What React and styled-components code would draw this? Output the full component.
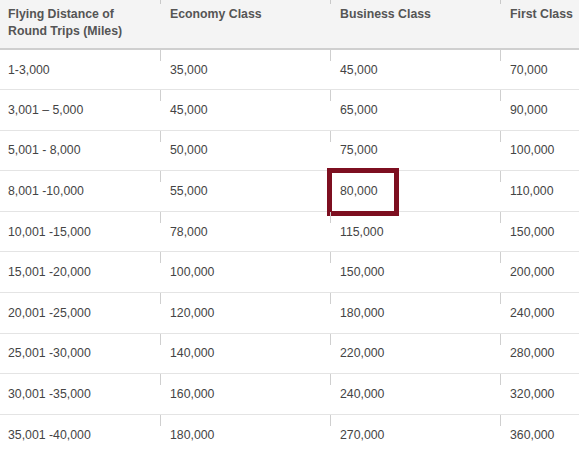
import React from 'react'
import styled, { createGlobalStyle } from 'styled-components'

const rows = [
  ['1-3,000', '35,000', '45,000', '70,000'],
  ['3,001 – 5,000', '45,000', '65,000', '90,000'],
  ['5,001 - 8,000', '50,000', '75,000', '100,000'],
  ['8,001 -10,000', '55,000', '80,000', '110,000'],
  ['10,001 -15,000', '78,000', '115,000', '150,000'],
  ['15,001 -20,000', '100,000', '150,000', '200,000'],
  ['20,001 -25,000', '120,000', '180,000', '240,000'],
  ['25,001 -30,000', '140,000', '220,000', '280,000'],
  ['30,001 -35,000', '160,000', '240,000', '320,000'],
  ['35,001 -40,000', '180,000', '270,000', '360,000'],
]

const GlobalStyle = createGlobalStyle`
  body {
    margin: 0;
    background: #fff;
    font-family: "Liberation Sans", Arial, sans-serif;
    overflow: hidden;
  }
`

const Table = styled.table`
  border-collapse: collapse;
  width: 579px;
  table-layout: fixed;
  font-size: 12.3px;
  color: #444;
`

const Head = styled.th`
  position: relative;
  box-sizing: border-box;
  width: ${p => p.$w ? p.$w + 'px' : 'auto'};
  background: #f4f4f4;
  border-bottom: 2px solid #cfcfcf;
  color: #555;
  font-weight: bold;
  text-align: left;
  vertical-align: top;
  line-height: 17px;
  padding: 6px 9px 8px ${p => p.$first ? 8 : 10}px;
  height: 48px;
  white-space: nowrap;
  &::before {
    content: '';
    display: ${p => p.$first ? 'none' : 'block'};
    position: absolute;
    left: 0;
    top: 0;
    width: 1px;
    height: 4px;
    background: #c9c9c9;
  }
`

const Row = styled.tr`
  & + & td {
    border-top: 1px solid #e4e4e4;
  }
`

const Cell = styled.td`
  position: relative;
  height: 40.6px;
  padding: 0 9px 0 ${p => p.$first ? 8 : 10}px;
  box-sizing: border-box;
  vertical-align: middle;
  white-space: nowrap;
  &::before {
    content: '';
    display: ${p => p.$first ? 'none' : 'block'};
    position: absolute;
    left: 0;
    top: 0;
    width: 1px;
    height: 11px;
    background: #cfcfcf;
  }
`

const Highlight = styled.span`
  position: absolute;
  left: -3px;
  top: -3px;
  width: 62px;
  height: 38px;
  border: 5px solid #7d0f20;
`

const widths = [160, 170, 170, null]

export default function App() {
  return (
    <>
      <GlobalStyle />
      <Table>
        <thead>
          <tr>
            <Head $w={widths[0]} $first>Flying Distance of<br />Round Trips (Miles)</Head>
            <Head $w={widths[1]}>Economy Class</Head>
            <Head $w={widths[2]}>Business Class</Head>
            <Head>First Class</Head>
          </tr>
        </thead>
        <tbody>
          {rows.map((r, i) => (
            <Row key={i}>
              {r.map((v, j) => (
                <Cell key={j} $first={j === 0}>
                  {v}
                  {v === '80,000' && <Highlight />}
                </Cell>
              ))}
            </Row>
          ))}
        </tbody>
      </Table>
    </>
  )
}
